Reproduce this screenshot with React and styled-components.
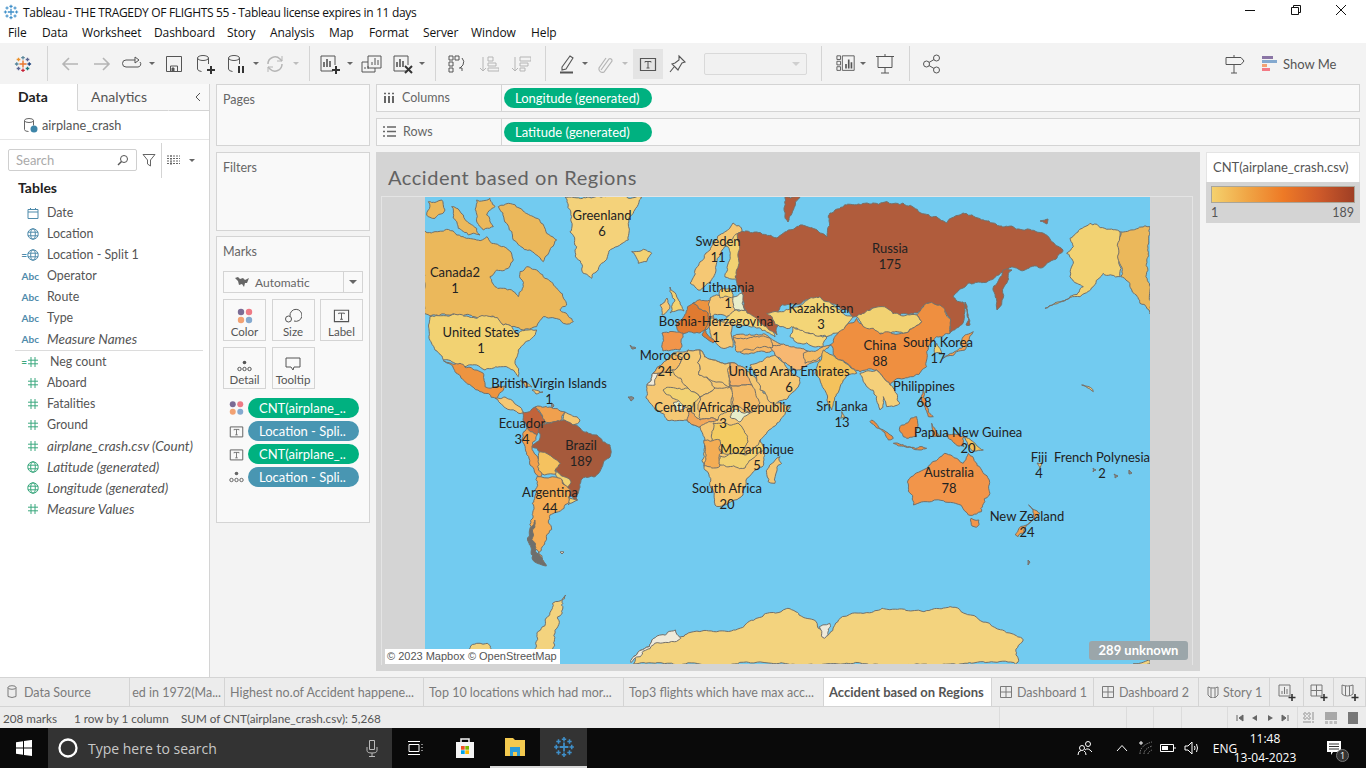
import React from 'react';
import styled, { createGlobalStyle } from 'styled-components';

const GlobalStyle = createGlobalStyle`
  html, body { margin: 0; padding: 0; background: #f3f3f3; overflow: hidden; }
  * { box-sizing: border-box; }
  body { font-family: Lato, "Open Sans", sans-serif; }
`;

const Page = styled.div`
  width: 1366px;
  height: 768px;
  display: flex;
  flex-direction: column;
  overflow: hidden;
  color: #555;
`;

const TitleBar = styled.div`
  height: 24px;
  background: #fff;
  display: flex;
  align-items: center;
  padding-left: 3px;
  color: #111;
  font: 12px "Open Sans", sans-serif;
  letter-spacing: -0.32px;
  > svg { margin-right: 4px; }
`;
const WindowButtons = styled.div`
  margin-left: auto;
  display: flex;
  width: 122px;
  justify-content: space-between;
  padding: 0 19px 4px 0;
  align-items: center;
`;
const MenuBar = styled.div`
  height: 19px;
  background: #fff;
  display: flex;
  color: #111;
  font: 12px "Open Sans", sans-serif;
  letter-spacing: -0.1px;
  padding-bottom: 2px;
  align-items: center;
`;
const MenuItem = styled.span`
  width: ${p => p.$w}px;
  flex: none;
`;

const Toolbar = styled.div`
  height: 41px;
  background: #f3f3f3;
  display: flex;
  align-items: center;
  padding-left: 8px;
`;
const Tool = styled.div`
  width: ${p => p.$w}px;
  height: 30px;
  flex: none;
  margin-left: ${p => p.$ml || 0}px;
  display: flex;
  align-items: center;
  justify-content: center;
  color: ${p => (p.$off ? '#b5b5b5' : '#555')};
  background: ${p => (p.$on ? '#e4e4e4' : 'transparent')};
`;
const Caret = styled.i`
  width: ${p => p.$w}px;
  flex: none;
  display: flex;
  justify-content: center;
  &::after {
    content: '';
    border: 3px solid transparent;
    border-top: 3px solid ${p => (p.$off ? '#bdbdbd' : '#666')};
    border-bottom: 0;
  }
`;
const Sep = styled.div`
  width: ${p => p.$w}px;
  height: 35px;
  flex: none;
  display: flex;
  justify-content: center;
  &::after { content: ''; width: 1px; background: #d4d4d4; }
`;
const DisabledSelect = styled.div`
  width: 103px;
  height: 22px;
  margin-left: 13px;
  flex: none;
  border: 1px solid #d9d9d9;
  border-radius: 2px;
  background: #f1f1f1;
  display: flex;
  align-items: center;
  justify-content: flex-end;
  padding-right: 6px;
  &::after {
    content: '';
    border: 4px solid transparent;
    border-top: 4px solid #cfcfcf;
    border-bottom: 0;
  }
`;
const ShowMe = styled.div`
  width: 117px;
  flex: none;
  padding-left: 13px;
  display: flex;
  align-items: center;
  gap: 6px;
  font-size: 13px;
  color: #555;
`;
const Spacer = styled.div`flex: 1;`;

const Main = styled.div`
  height: 593px;
  display: flex;
  background: #f3f3f3;
`;
const DataPane = styled.aside`
  width: 210px;
  flex: none;
  background: #fff;
  border-right: 1px solid #d4d4d4;
  display: flex;
  flex-direction: column;
`;
const PaneTabs = styled.div`
  height: 27px;
  display: flex;
  background: #f9f9f9;
`;
const PaneTab = styled.div`
  width: ${p => p.$w}px;
  padding-left: ${p => p.$pad}px;
  background: ${p => (p.$on ? '#fff' : '#f9f9f9')};
  border-right: 1px solid ${p => (p.$on ? '#d4d4d4' : 'transparent')};
  border-bottom: 1px solid ${p => (p.$on ? 'transparent' : '#d4d4d4')};
  font-size: 14px;
  font-weight: ${p => (p.$on ? 700 : 400)};
  color: ${p => (p.$on ? '#222' : '#555')};
  line-height: 26px;
`;
const Collapse = styled.div`
  flex: 1;
  border-bottom: 1px solid #d4d4d4;
  display: flex;
  align-items: center;
  justify-content: flex-end;
  padding-right: 6px;
`;
const SourceRow = styled.div`
  height: 29px;
  display: flex;
  align-items: center;
  gap: 3px;
  padding-left: 23px;
  border-bottom: 1px solid #e6e6e6;
  font-size: 12.7px;
  color: #555;
`;
const SearchRow = styled.div`
  height: 31px;
  padding: 9px 0 0 8px;
  display: flex;
  align-items: center;
  color: #666;
`;
const SearchBox = styled.div`
  width: 129px;
  height: 22px;
  flex: none;
  border: 1px solid #cfcfcf;
  border-radius: 2px;
  padding: 0 7px;
  display: flex;
  align-items: center;
  justify-content: space-between;
  color: #aaa;
  font-size: 13px;
`;
const IconSlot = styled.span`
  width: ${p => p.$w}px;
  flex: none;
  display: flex;
  justify-content: center;
`;
const TablesHead = styled.div`
  padding: 8px 0 0 18px;
  height: 31px;
  font-size: 14px;
  font-weight: 700;
  color: #222;
`;
const FieldRow = styled.div`
  height: 21px;
  display: flex;
  align-items: center;
  color: #555;
  font-size: ${p => (p.$i ? 13.5 : 12.4)}px;
  font-style: ${p => (p.$i ? 'italic' : 'normal')};
  white-space: nowrap;
`;
const FieldIcon = styled.span`
  width: 47px;
  padding-right: 8px;
  flex: none;
  display: flex;
  justify-content: flex-end;
  align-items: center;
  font-style: normal;
  font-size: 10px;
  font-weight: 700;
  color: ${p => p.$c};
`;
const FieldIndent = styled.span`padding-left: ${p => p.$x || 0}px;`;
const FieldRule = styled.div`
  height: 1px;
  background: #dcdcdc;
  margin: 0.5px 6px 0.5px 15px;
`;

const SideCol = styled.div`
  width: 154px;
  margin-left: 6px;
  flex: none;
  display: flex;
  flex-direction: column;
`;
const Card = styled.section`
  height: ${p => p.$h}px;
  margin-bottom: ${p => p.$mb}px;
  background: #f9f9f9;
  border: 1px solid #d4d4d4;
  padding: 7px 6px;
  font-size: 12.5px;
  color: #666;
  flex: none;
`;
const MarkType = styled.div`
  height: 22px;
  margin-top: 12px;
  width: 140px;
  border: 1px solid #d4d4d4;
  background: #f9f9f9;
  display: flex;
  align-items: center;
  font-size: 12px;
  padding-left: 11px;
  gap: 6px;
`;
const MarkArrow = styled.span`
  margin-left: auto;
  width: 19px;
  height: 100%;
  border-left: 1px solid #d4d4d4;
  display: flex;
  align-items: center;
  justify-content: center;
  &::after {
    content: '';
    border: 4px solid transparent;
    border-top: 4px solid #666;
    border-bottom: 0;
  }
`;
const MarkGrid = styled.div`
  display: grid;
  grid-template-columns: 43px 43px 43px;
  grid-auto-rows: 42px;
  column-gap: 5.5px;
  row-gap: 6px;
  margin-top: 6px;
`;
const MarkBtn = styled.div`
  border: 1px solid #d4d4d4;
  display: flex;
  flex-direction: column;
  align-items: center;
  justify-content: flex-end;
  gap: 1px;
  font-size: 11.5px;
  color: #555;
  padding-bottom: 2px;
`;
const PillList = styled.div`
  margin-top: 9px;
  display: flex;
  flex-direction: column;
  gap: 3px;
`;
const PillRow = styled.div`
  display: flex;
  align-items: center;
  height: 20px;
  padding-left: 6px;
  gap: 4px;
`;
const Pill = styled.div`
  height: 20px;
  width: ${p => p.$w}px;
  flex: none;
  border-radius: 10px;
  background: ${p => p.$c};
  color: #fff;
  font-size: 13px;
  line-height: 20px;
  padding-left: 11px;
  white-space: nowrap;
  overflow: hidden;
`;

const Work = styled.div`
  width: 984px;
  margin-left: 6px;
  flex: none;
  display: flex;
  flex-direction: column;
`;
const Shelf = styled.div`
  height: 28px;
  margin-bottom: 6px;
  background: #f9f9f9;
  border: 1px solid #d4d4d4;
  display: flex;
  align-items: center;
  flex: none;
`;
const ShelfName = styled.div`
  width: 125px;
  height: 100%;
  flex: none;
  border-right: 1px solid #d4d4d4;
  margin-right: 2px;
  display: flex;
  align-items: center;
  gap: 7px;
  padding-left: 6px;
  padding-bottom: 1px;
  font-size: 12.5px;
  color: #666;
`;
const ViewRow = styled.div`
  display: flex;
  gap: 6px;
  flex: 1;
`;
const Canvas = styled.div`
  width: 824px;
  height: 519px;
  background: #d4d4d4;
  padding: 0 7px 0 5px;
  flex: none;
`;
const SheetTitle = styled.div`
  height: 44px;
  padding: 13px 0 0 7px;
  font-size: 20px;
  line-height: 25px;
  color: #626262;
  letter-spacing: 0.55px;
`;
const MapFrame = styled.div`
  position: relative;
  height: 469px;
  border: 1px solid #e4e4e4;
  border-bottom-width: 0;
  display: flex;
  justify-content: center;
  svg { display: block; }
`;
const Attribution = styled.div`
  position: absolute;
  left: 3px;
  bottom: 1px;
  width: 175px;
  height: 15px;
  background: #fff;
  color: #555;
  font: 11px/15px "Liberation Sans", sans-serif;
  padding-left: 2px;
  white-space: nowrap;
`;
const Unknown = styled.div`
  position: absolute;
  right: 4px;
  bottom: 5px;
  width: 99px;
  height: 19px;
  background: #9ba6aa;
  border-radius: 3px;
  color: #fff;
  font-size: 13px;
  font-weight: 700;
  line-height: 19px;
  text-align: center;
`;
const Legend = styled.div`
  width: 154px;
  height: 71px;
  background: #d4d4d4;
  flex: none;
`;
const LegendHead = styled.div`
  height: 30px;
  background: #fff;
  border: 1px solid #e4e4e4;
  border-bottom: 0;
  padding-left: 6px;
  font-size: 13px;
  line-height: 29px;
  color: #555;
  white-space: nowrap;
`;
const Ramp = styled.div`
  height: 17px;
  margin: 4px 5px 0;
  border: 1px solid #a9a598;
  background: linear-gradient(90deg, #f5d16d 0%, #f0a545 25%, #ee7a26 50%, #cf5a2a 75%, #9f3f25 100%);
`;
const RampLabels = styled.div`
  display: flex;
  justify-content: space-between;
  padding: 2px 6px 0 5px;
  font-size: 12.5px;
  color: #555;
`;

const TabStrip = styled.div`
  height: 30px;
  display: flex;
  background: #ececec;
  border-top: 1px solid #d4d4d4;
  border-bottom: 1px solid #d4d4d4;
  flex: none;
`;
const Tab = styled.div`
  width: ${p => p.$w}px;
  flex: none;
  display: flex;
  align-items: center;
  justify-content: ${p => (p.$end ? 'flex-end' : p.$center ? 'center' : 'flex-start')};
  padding-left: ${p => (p.$center || p.$end ? 0 : p.$pad || 5)}px;
  padding-right: ${p => (p.$end ? 3 : 0)}px;
  gap: ${p => p.$gap || 5}px;
  overflow: hidden;
  white-space: nowrap;
  border-right: 1px solid #d4d4d4;
  background: ${p => (p.$on ? '#fff' : '#ececec')};
  color: ${p => (p.$on ? '#555' : '#7b7b7b')};
  font-size: ${p => (p.$on ? 13 : 12.5)}px;
  font-weight: ${p => (p.$on ? 700 : 400)};
`;
const StatusBar = styled.div`
  height: 21px;
  display: flex;
  background: #ececec;
  align-items: center;
  font-size: 11.7px;
  color: #555;
  flex: none;
`;
const StatusText = styled.span`
  width: ${p => p.$w}px;
  padding-left: ${p => p.$pad}px;
  flex: none;
  white-space: nowrap;
`;
const StatusCell = styled.span`
  width: ${p => p.$w}px;
  height: 100%;
  flex: none;
  display: flex;
  align-items: center;
  justify-content: center;
  gap: ${p => p.$gap || 0}px;
  border-left: 1px solid #dcdcdc;
`;

const Taskbar = styled.div`
  height: 40px;
  background: #0a0a0a;
  display: flex;
  align-items: center;
  flex: none;
  color: #fff;
  font-family: "Open Sans", sans-serif;
`;
const TaskSlot = styled.div`
  width: ${p => p.$w}px;
  height: 100%;
  flex: none;
  display: flex;
  align-items: center;
  justify-content: center;
  background: ${p => (p.$on ? '#333' : 'transparent')};
  border-bottom: ${p => (p.$mark ? '2px solid #d8d8d8' : '0')};
`;
const TaskSearch = styled.div`
  width: 344px;
  height: 100%;
  flex: none;
  background: #333;
  display: flex;
  align-items: center;
  padding: 0 14px 0 10px;
  gap: 10px;
  color: #c8c8c8;
  font-size: 14px;
`;
const MicSlot = styled.span`margin-left: auto; display: flex;`;
const TrayText = styled.span`
  width: ${p => p.$w}px;
  flex: none;
  display: flex;
  flex-direction: column;
  align-items: center;
  white-space: nowrap;
  font-size: 12px;
  line-height: 19px;
`;
const NotifyWrap = styled.div`
  position: relative;
  width: 32px;
  margin: 0 16px 0 31px;
  flex: none;
  display: flex;
  justify-content: center;
`;
const NotifyBadge = styled.span`
  position: absolute;
  left: 18px;
  top: 9px;
  width: 13px;
  height: 13px;
  border-radius: 50%;
  background: #333;
  border: 1px solid #777;
  font-size: 9px;
  line-height: 11px;
  text-align: center;
`;

/* icons */
const Svg = ({ s = 20, h, children, ...rest }) => (
  <svg width={s} height={h || s} viewBox={`0 0 ${s} ${h || s}`} fill="none" stroke="currentColor" {...rest}>
    {children}
  </svg>
);
const Cross = ({ x, y, r, c, w = 1.4 }) => (
  <path d={`M${x - r} ${y}H${x + r}M${x} ${y - r}V${y + r}`} stroke={c} strokeWidth={w} />
);
const Logo = ({ mono, s = 20 }) => {
  const c = k => mono || k;
  return (
    <Svg s={20} width={s} height={s}>
      <Cross x={10} y={10} r={4} c={c('#e8762d')} w={1.6} />
      <Cross x={10} y={3} r={2} c={c('#5b879b')} />
      <Cross x={10} y={17} r={2} c={c('#c72035')} />
      <Cross x={3} y={10} r={2} c={c('#59879b')} />
      <Cross x={17} y={10} r={2} c={c('#1f447e')} />
      <Cross x={5} y={5} r={2} c={c('#eb912b')} />
      <Cross x={15} y={5} r={2} c={c('#5c6692')} />
      <Cross x={5} y={15} r={2} c={c('#5c6692')} />
      <Cross x={15} y={15} r={2} c={c('#1f7a7a')} />
    </Svg>
  );
};
const Back = () => <Svg><path d="M18 10H3M9 4l-6 6 6 6" strokeWidth="1.6" /></Svg>;
const Fwd = () => <Svg><path d="M2 10h15M11 4l6 6-6 6" strokeWidth="1.6" /></Svg>;
const Loop = () => <Svg><path d="M13 6H4a3 3 0 0 0 0 7h12a3 3 0 0 0 2-5M13 3v6l4-3z" strokeWidth="1" /></Svg>;
const Save = () => <Svg><path d="M2.500 2.500h15v15h-15zM6.500 17v-5h7v5" /><path d="M8 14h2v3H8z" fill="currentColor" /></Svg>;
const Can = ({ children }) => (
  <Svg s={22}>
    <ellipse cx="9" cy="5" rx="5.500" ry="2.500" />
    <path d="M3.500 5v11q0 2 4 2.500M14.500 5v6" />
    {children}
  </Svg>
);
const Plus = ({ x, y, c = '#333' }) => <path d={`M${x - 4} ${y}h8M${x} ${y - 4}v8`} stroke={c} strokeWidth="2" />;
const Refresh = () => <Svg><path d="M3 10a7 7 0 0 1 12-5l2 2M17 10a7 7 0 0 1-12 5l-2-2" strokeWidth="1.5" /><path d="M17 2v5h-5M3 18v-5h5" strokeWidth="1" /></Svg>;
const Sheet = ({ children }) => (
  <Svg s={22}>
    <path d="M14 18H2V3h14v9" />
    <path d="M5 14V9M8 14V6M11 14V8" strokeWidth="1.6" />
    {children}
  </Svg>
);
const Dup = () => <Svg s={22}><path d="M8 3h13v12H8zM8 9H2v10h13v-4" /><path d="M12 12V9M15 12V5M18 12V7M5 16v-2M8 16v-3" /></Svg>;
const Grp = () => <Svg><path d="M2 2h4v4H2zM8 2h4v4H8zM2 8h4v4H2zM2 14h4v4H2z" /><path d="M15 4q3 3 1 7l-3 3M12 14h3v3" /></Svg>;
const SortUp = () => <Svg s={20}><path d="M4 3v14M1 14l3 3 3-3" /><path d="M9 3h5v4H9zM9 9h8v3H9zM9 14h11v3H9z" /></Svg>;
const SortDown = () => <Svg s={20}><path d="M4 3v14M1 14l3 3 3-3" /><path d="M9 3h11v4H9zM9 9h8v3H9zM9 14h5v3H9z" /></Svg>;
const Pen = () => <Svg><path d="M4 13L12 2l3 2-7 11-4 1z" strokeWidth="1.1" /><path d="M2 18.500h13" strokeWidth="2" /></Svg>;
const Clip = () => <Svg><path d="M6 16L14 5a2 2 0 0 1 3 2L9 18a3.500 3.500 0 0 1-5-4l7-10" strokeWidth="1.2" /></Svg>;
const TBox = ({ s = 18 }) => (
  <Svg s={18} width={s} height={s} viewBox="0 0 18 18">
    <path d="M1.500 3.500h15v12h-15z" strokeWidth="1.2" />
    <path d="M6 6.500h6M9 6.500v6.500M7.500 13h3M6 6.500v1M12 6.500v1" strokeWidth="1" />
  </Svg>
);
const PinIcon = () => <Svg><path d="M12 2l6 6-3 1-3 5-1 2-6-6 3-1 4-3zM7 13l-4 5" strokeWidth="1.1" /></Svg>;
const ChartIcon = () => <Svg s={22}><path d="M1 2h4v4H1zM1 8h4v4H1zM1 14h4v4H1zM7 2h13v16H7z" /><path d="M11 16v-5M14 16V6M17 16v-7" strokeWidth="1.8" /></Svg>;
const Present = () => <Svg s={22}><path d="M2 3.500h18M4 3.500v11h14v-11M11 14.500V20M7 20h8M11 1v2" /></Svg>;
const Share = () => <Svg><circle cx="4.500" cy="10" r="3" /><circle cx="14.500" cy="4" r="3" /><circle cx="14.500" cy="16" r="3" /><path d="M7 8.500l5-3M7 11.500l5 3" /></Svg>;
const Sign = () => <Svg><path d="M1 3.500h15l3 3.500-3 3.500H1zM9 1v2.500M9 10.500V19M6 19h6" /></Svg>;
const ShowMeBars = () => (
  <Svg s={15} h={16} stroke="none">
    <path d="M0 0h11v3H0z" fill="#8a75a5" />
    <path d="M0 4h15v3H0z" fill="#84a9cf" />
    <path d="M0 8h5v3H0z" fill="#f2a273" />
    <path d="M0 12h8v3H0z" fill="#f37a85" />
  </Svg>
);
const Globe = ({ c }) => (
  <Svg s={12} stroke={c}>
    <circle cx="6" cy="6" r="5.200" />
    <ellipse cx="6" cy="6" rx="2.300" ry="5.200" />
    <path d="M.8 4.200h10.400M.8 7.800h10.400" />
  </Svg>
);
const Hash = ({ c }) => <Svg s={12} stroke={c}><path d="M4 1v10M8 1v10M1 4.200h10M1 7.800h10" /></Svg>;
const Cal = ({ c }) => <Svg s={12} stroke={c}><path d="M1 2.500h10v9H1zM1 5h10M3.500 1v2M8.500 1v2" /></Svg>;
const Dots = () => (
  <Svg s={16} stroke="none">
    <circle cx="4" cy="4" r="3.200" fill="#7b6b94" />
    <circle cx="12" cy="4" r="3.200" fill="#ee7a85" />
    <circle cx="4" cy="12" r="3.200" fill="#f2a273" />
    <circle cx="12" cy="12" r="3.200" fill="#84a9cf" />
  </Svg>
);
const DetailDots = () => (
  <Svg s={15} h={12}>
    <circle cx="7.500" cy="2.500" r="1.800" fill="currentColor" stroke="none" />
    <circle cx="2.500" cy="9" r="1.700" />
    <circle cx="7.500" cy="9" r="1.700" />
    <circle cx="12.500" cy="9" r="1.700" />
  </Svg>
);
const SizeIcon = () => <Svg s={18}><path d="M6 10a6 6 0 1 1 4 5" /><circle cx="4.500" cy="13" r="3" /></Svg>;
const Bubble = () => <Svg s={16}><path d="M1 2h14v9H9l-1 3-2-3H1z" /></Svg>;
const Bars3 = () => <Svg s={12}><path d="M2 4v7M6 4v7M10 4v7" strokeWidth="2" /><path d="M1 1.500h2M5 1.500h2M9 1.500h2" strokeWidth="1.500" /></Svg>;
const RowsIcon = () => <Svg s={13}><path d="M0 2h2M4 2h9M0 6.500h2M4 6.500h9M0 11h2M4 11h9" strokeWidth="1.500" /></Svg>;
const Lens = () => <Svg s={12} stroke="#555"><circle cx="7" cy="5" r="3.500" /><path d="M4.500 7.500L1 11" strokeWidth="1.400" /></Svg>;
const Funnel = () => <Svg s={14}><path d="M1 1.500h12L8.500 7v6l-3-2V7z" /></Svg>;
const GridList = () => <Svg s={13} h={10}><path d="M0 1h13M0 3.500h13M0 6h13M0 8.500h13M4 0v10" strokeWidth="1" strokeDasharray="2 1" /></Svg>;
const SourceIcon = () => (
  <Svg s={16}>
    <ellipse cx="6" cy="3.500" rx="4.500" ry="2" stroke="#666" />
    <path d="M1.500 3.500v9q0 2 4 2M10.500 3.500v5" stroke="#666" />
    <circle cx="11" cy="12" r="3.500" fill="#3d85a8" stroke="none" />
  </Svg>
);
const MiniMap = () => <Svg s={14} h={10} stroke="none"><path d="M0 1l3-1 2 2 3-1 2 2 4-2-2 5-2 0-1 4-2-3-3 1-1-4z" fill="#666" /></Svg>;
const Cylinder = () => <Svg s={10} h={14}><ellipse cx="5" cy="2.500" rx="4" ry="1.800" /><path d="M1 2.500v9q4 2 8 0v-9" /></Svg>;
const DashIcon = () => <Svg s={12}><path d="M.5.500h11v11H.5zM6 .5v11M.5 6h11" /></Svg>;
const StoryIcon = () => <Svg s={12}><path d="M1 1q2.500 1 5 1t5-1v8q-2 3-5 3t-5-3zM4 2v10M8 2v10" /></Svg>;
const TabNew = ({ k }) => (
  <Svg s={18} stroke="#777">
    {k === 'sheet' && <path d="M1 2h11v11H1zM4 11V8M6.500 11V4M9 11V6" />}
    {k === 'dash' && <path d="M1 2h11v11H1zM6.500 2v11M1 7.500h11" />}
    {k === 'story' && <path d="M1 2q3 1 5.500 1T12 2v9q-2 2-5.500 2T1 11zM4.500 3v10M8.500 3v10" />}
    <path d="M14 11v7M10.500 14.500h7" stroke="#333" strokeWidth="1.600" />
  </Svg>
);

/* map: polygons traced per region, each group has its own scale. Edges get jagged
   with a noise keyed on the edge midpoint, so shared borders stay shared. */
const coast = '#73706a';
const noise = (x, y, k) => {
  const v = Math.sin(x * 12.9898 + y * 78.233 + k * 37.719) * 43758.5453;
  return (v - Math.floor(v)) * 2 - 1;
};
const jag = (a, b, min, out) => {
  const len = Math.hypot(b[0] - a[0], b[1] - a[1]);
  if (len < min) { out.push(b); return; }
  const mx = (a[0] + b[0]) / 2;
  const my = (a[1] + b[1]) / 2;
  const amp = Math.min(len * 0.16, min * 0.7);
  const mid = [mx + noise(mx, my, 1) * amp, my + noise(mx, my, 2) * amp];
  jag(a, mid, min, out);
  jag(mid, b, min, out);
};
const rough = (pts, min) => {
  const p = pts.trim().split(/\s+/).map(s => s.split(',').map(Number));
  const out = [];
  p.forEach((a, i) => jag(a, p[(i + 1) % p.length], min, out));
  return out.map(q => `${q[0].toFixed(1)},${q[1].toFixed(1)}`).join(' ');
};
const Z = ({ t, items, min }) => (
  <g transform={t}>
    {items.map(([pts, fill], i) => (
      <polygon key={i} points={rough(pts, min)} fill={fill} stroke={coast} strokeWidth="1" vectorEffect="non-scaling-stroke" strokeLinejoin="round" />
    ))}
  </g>
);

const Y1 = '#f2d272';
const Y2 = '#f5c874';
const Y3 = '#f5bb65';
const OR = '#ef8f40';
const PALE = '#e8eecb';
const RU = '#b05c3c';

const screenPolys = [
  // africa base and countries, screen pixels
  ['647,385 653,373 663,363 673,353 688,350 700,350 713,360 730,363 743,367 755,377 763,393 777,403 790,407 788,410 777,423 760,440 764,450 762,467 746,480 743,495 725,505 715,505 704,467 704,450 705,440 700,427 687,420 667,420 650,403 646,398', Y2],
  ['647,385 653,373 660,373 655,385', '#f0ead8'],
  ['653,373 663,363 673,353 682,358 672,370 660,373', Y3],
  ['682,358 688,350 700,350 699,375 715,388 700,397 688,388 672,370', '#f5cb75'],
  ['700,350 713,360 730,363 730,387 699,375', '#f5cb75'],
  ['730,363 743,367 752,385 730,385', '#f4b268'],
  ['730,385 752,385 760,403 750,413 733,407', '#f4bc6a'],
  ['733,410 750,413 740,422 730,417', PALE],
  ['673,403 680,400 685,408 675,410', PALE],
  ['663,390 688,388 700,397 690,410 672,398', Y1],
  ['700,397 715,388 730,387 733,407 718,420 700,420', Y2],
  ['690,410 700,420 718,420 700,427 687,420', '#f2a75a'],
  ['713,423 738,423 748,442 745,455 723,453 713,443', '#f4cc62'],
  ['704,440 720,440 720,466 704,466', '#f4ad55'],
  ['720,456 745,455 760,440 764,450 745,468 720,465', Y1],
  // arabia, middle east
  ['750,365 775,355 790,370 800,378 800,383 788,398 775,405 760,390', Y2],
  ['733,336 770,338 785,345 770,352 740,352', '#f5b868'],
  ['770,345 805,350 820,360 800,370 790,366 775,355', '#f7b872'],
  // central america, caribbean
  ['495,398 505,397 520,407 525,414 518,413 500,403', Y2],
  ['520,380 532,387 525,387', Y2],
  ['532,390 543,392 536,394', Y2],
  // south america, upper part
  ['523,412 535,407 545,423 537,435 527,428 523,420', '#c2633a'],
  ['535,407 550,407 565,412 560,422 545,422', '#f0a04e'],
  ['565,412 580,420 573,425 563,420', Y2],
  ['527,428 537,435 532,447 545,468 540,478 530,465 522,440', '#f2a04e'],
  ['532,447 540,438 538,425 553,422 565,420 580,428 597,435 610,445 610,457 602,467 594,477 581,480 577,500 570,495 558,478 553,460 540,452', '#a65a3c'],
  // europe
  ['690,283 695,270 713,243 733,223 742,230 735,240 722,250 716,270 710,282 698,290', Y2],
  ['725,277 730,255 725,245 740,232 752,238 752,270 738,278', Y1],
  ['670,287 680,302 684,311 670,313 675,300', Y1],
  ['660,305 667,298 670,306 662,315', Y2],
  ['677,323 693,303 708,313 705,330 700,333 682,335', '#e07a30'],
  ['693,303 710,300 712,325 705,330 708,313', '#ee9440'],
  ['662,333 683,333 680,350 663,351', '#f2954a'],
  ['705,330 715,340 713,343 702,335', '#e07a30'],
  ['710,298 733,297 735,315 710,317', Y2],
  ['733,297 743,293 745,310 735,310', PALE],
  ['735,310 773,312 775,337 747,325 720,323', '#f5d67a'],
  ['710,318 733,322 733,347 720,347 710,333', Y2],
  ['733,338 770,338 772,348 737,352', '#f5b868'],
  ['720,290 730,288 733,297 720,298', Y1],
  // russia
  ['738,233 757,232 777,238 800,225 817,230 827,237 830,213 835,210 843,207 867,203 903,203 913,207 947,223 963,213 993,223 1023,230 1043,233 1063,250 1057,258 1040,268 1013,267 1007,270 987,282 970,283 953,297 963,302 963,323 950,333 950,318 940,305 927,303 917,313 900,315 880,307 853,317 820,297 780,307 777,335 747,313 743,300 735,277', RU],
  ['1003,270 1012,270 1002,300 997,310 993,290', RU],
  ['785,197 800,197 788,222 785,215', RU],
  ['965,302 970,325 966,325', RU],
  ['1040,221 1048,219 1047,224', RU],
  // specks
  ['1037,463 1042,463 1040,468', Y2],
  ['1093,468 1096,470 1093,472', '#888'],
  ['1114,474 1118,476 1115,478', '#888'],
  ['1129,470 1132,473 1129,474', '#888'],
  ['1028,560 1030,562 1028,565', '#888'],
  ['560,552 564,552 562,554', '#f0ead8'],
  ['630,345 636,348 632,349', '#888'],
  ['628,397 634,398 631,401', '#888'],
  ['551,403 554,406 552,408', '#888'],
];

const zoom6Polys = [
  ['-40,370 0,365 120,320 220,380 190,420 140,440 80,430 35,410 0,410', '#f3d577'],
  ['230,380 300,350 360,375 410,375 425,395 370,430 300,430 250,410', Y1],
  ['150,465 185,420 230,385 250,410 300,432 370,430 425,395 410,375 440,340 480,345 510,385 510,430 470,440 445,470 440,530 400,560 330,585 290,540 240,545 180,510', OR],
  ['40,410 140,440 130,470 60,460 30,440', '#f5d67a'],
  ['70,490 130,470 150,465 130,490 110,510 75,520', Y3],
  ['130,480 180,510 230,550 190,570 160,640 155,660 120,570 105,550', '#f4c25c'],
  ['185,665 195,680 182,685', Y2],
  ['240,550 290,540 330,585 360,640 320,650 310,620 300,660 290,620 260,590', '#f5d07a'],
  ['470,460 485,490 465,490', Y1],
  ['490,505 550,470 550,440 580,425 555,480', '#f2a04e'],
  ['430,600 440,650 460,680 445,680 425,630', OR],
  ['275,690 340,745 325,750 270,695', OR],
  ['340,760 440,775 420,780', OR],
  ['360,710 410,680 410,740 370,740', OR],
  ['455,700 480,740 460,740', OR],
  ['500,730 552,740 552,770 505,745', OR],
  ['553,740 610,780 570,775', '#f4c25c'],
  ['870,145 930,100 1020,125 1020,260 970,250 940,290 900,320 795,355 880,315 910,290 870,260 880,220 860,190 880,170', Y1],
  ['1022,125 1110,110 1110,372 1080,340 1050,280 1022,260', '#ebb85b'],
  ['905,585 935,595 940,605 925,595', Y2],
];

const zoom5Polys = [
  ['132,120 165,125 200,118 230,135 260,145 290,150 320,140 335,160 365,170 385,180 400,210 385,235 350,240 330,260 345,290 395,300 415,320 430,290 420,245 440,230 470,240 495,265 525,290 560,345 540,360 580,395 550,400 525,385 490,380 470,410 430,420 395,410 370,405 340,378 150,378 132,370', '#ebb85b'],
  ['145,35 185,30 195,60 165,85 140,75', '#ebb85b'],
  ['215,50 250,75 290,115 300,135 265,135 235,115', '#ebb85b'],
  ['290,30 330,25 345,50 320,75 340,110 310,120 290,85', '#ebb85b'],
  ['355,50 385,40 420,55 460,80 500,130 530,150 490,215 450,180 400,150 380,100', '#ebb85b'],
  ['150,380 340,380 370,405 395,410 415,430 470,420 455,445 415,480 405,520 415,560 400,540 370,530 315,540 290,525 255,530 225,520 190,510 165,480 148,430', Y1],
  ['190,512 240,520 310,550 315,590 345,590 375,588 350,625 300,605 260,580 225,545', '#ee9440'],
  ['555,22 785,22 760,70 745,100 745,150 700,175 665,220 635,265 610,250 590,205 590,170 570,125 575,80', '#f4d27a'],
  ['755,185 790,178 815,190 800,215 775,220', Y1],
];

const zoom7Polys = [
  ['305,35 345,70 335,95 345,105 315,105 303,90', '#f5c25f'],
  ['335,90 365,125 358,145 340,115', Y1],
  ['300,110 345,115 362,170 352,205 325,225 318,290 300,345 312,375 290,320 292,220', '#f5ad55'],
  ['296,240 282,300 295,365 318,378 300,340 290,300', '#6f6f6c'],
  ['360,170 378,180 360,195', Y1],
  ['765,50 768,70 755,130 742,125 742,85', Y2],
  ['1080,40 1115,70 1125,40 1165,120 1165,165 1150,215 1125,225 1100,190 1060,180 1020,195 1010,120 1045,85', '#f2954a'],
  ['1130,235 1145,240 1140,262 1132,258', '#f2954a'],
  ['1240,195 1262,220 1245,245 1250,220', '#f2a04e'],
  ['1245,245 1235,260 1220,290 1215,285', '#f2a04e'],
  ['485,672 485,650 520,600 600,575 680,570 780,505 830,540 850,590 880,535 960,505 1040,515 1090,500 1190,570 1230,600 1215,672', '#f3d37e'],
  ['480,668 485,650 520,600 565,570 575,595 525,610 498,650', '#efeadb'],
  ['840,560 860,550 850,595', '#efeadb'],
  ['290,672 300,590 330,490 355,465 340,560 335,672', '#f3d37e'],
  ['185,610 205,610 225,672 90,672', '#f3d37e'],
  ['1440,672 1470,660 1472,672', '#f3d37e'],
];

const labels = [
  ['Greenland', 6, 602, 216], ['Sweden', 11, 718, 242], ['Russia', 175, 890, 249], ['Canada2', 1, 455, 273],
  ['Lithuania', 1, 728, 288], ['Kazakhstan', 3, 821, 309], ['Bosnia-Herzegovina', 1, 716, 322], ['United States', 1, 481, 333],
  ['China', 88, 880, 346], ['South Korea', 17, 938, 343], ['Morocco', 24, 665, 356], ['United Arab Emirates', 6, 789, 372],
  ['Philippines', 68, 924, 387], ['British Virgin Islands', 1, 549, 384], ['Central African Republic', 3, 723, 408],
  ['Sri Lanka', 13, 842, 407], ['Ecuador', 34, 522, 424], ['Papua New Guinea', 20, 968, 433], ['Brazil', 189, 581, 446],
  ['Mozambique', 5, 757, 450], ['Fiji', 4, 1039, 458], ['French Polynesia', 2, 1102, 458], ['Australia', 78, 949, 473],
  ['South Africa', 20, 727, 489], ['Argentina', 44, 550, 493], ['New Zealand', 24, 1027, 517],
];

const WorldMap = () => (
  <svg width="725" height="467" viewBox="425 197 725 467">
    <rect x="425" y="197" width="725" height="467" fill="#72cbf0" />
    <Z t="" items={screenPolys} min={3} />
    <Z t="translate(780 190) scale(0.3333)" items={zoom6Polys} min={9} />
    <Z t="translate(380 190) scale(0.3333)" items={zoom5Polys} min={9} />
    <Z t="translate(380 440) scale(0.523 0.3333)" items={zoom7Polys} min={8} />
    <g fontFamily="Lato, sans-serif" fontSize="13" fill="#222" textAnchor="middle">
      {labels.map(([name, n, x, y]) => (
        <g key={name}>
          <text x={x} y={y + 4}>{name}</text>
          <text x={x} y={y + 20}>{n}</text>
        </g>
      ))}
    </g>
  </svg>
);

const dims = [
  ['cal', 'Date'], ['globe', 'Location'], ['globe=', 'Location - Split 1'], ['abc', 'Operator'],
  ['abc', 'Route'], ['abc', 'Type'], ['abc', 'Measure Names', true],
];
const measures = [
  ['hash=', 'Neg count'], ['hash', 'Aboard'], ['hash', 'Fatalities'], ['hash', 'Ground'],
  ['hash', 'airplane_crash.csv (Count)', true], ['globeG', 'Latitude (generated)', true],
  ['globeG', 'Longitude (generated)', true], ['hash', 'Measure Values', true],
];
const BLUE = '#4f8bab';
const GREEN = '#3ba87e';
const Field = ({ kind, name, i }) => {
  const c = kind === 'abc' || kind === 'cal' || kind === 'globe' || kind === 'globe=' ? BLUE : GREEN;
  return (
    <FieldRow $i={i}>
      <FieldIcon $c={c}>
        {kind.endsWith('=') && '='}
        {kind === 'abc' && 'Abc'}
        {kind === 'cal' && <Cal c={c} />}
        {kind.startsWith('globe') && <Globe c={c} />}
        {kind.startsWith('hash') && <Hash c={c} />}
      </FieldIcon>
      <FieldIndent $x={kind === 'hash=' ? 3 : 0}>{name}</FieldIndent>
    </FieldRow>
  );
};

const menu = [['File', 34], ['Data', 40], ['Worksheet', 72], ['Dashboard', 73], ['Story', 43], ['Analysis', 59], ['Map', 40], ['Format', 54], ['Server', 48], ['Window', 60], ['Help', 40]];

const MarkPill = ({ icon, c, text }) => (
  <PillRow>
    <IconSlot $w={15}>{icon}</IconSlot>
    <Pill $w={111} $c={c}>{text}</Pill>
  </PillRow>
);

export default function App() {
  return (
    <Page>
      <GlobalStyle />
      <TitleBar>
        <Logo mono="#3f8fc9" s={16} />
        Tableau - THE TRAGEDY OF FLIGHTS 55 - Tableau license expires in 11 days
        <WindowButtons>
          <Svg s={12} stroke="#111"><path d="M1 6.500h10" /></Svg>
          <Svg s={12} stroke="#111"><path d="M1.500 3.500h7v7h-7zM3.500 3.500v-2h7v7h-2" /></Svg>
          <Svg s={12} stroke="#111"><path d="M1 1l10 10M11 1L1 11" /></Svg>
        </WindowButtons>
      </TitleBar>
      <MenuBar>
        <MenuItem $w={8} />
        {menu.map(([m, w]) => <MenuItem key={m} $w={w}>{m}</MenuItem>)}
      </MenuBar>
      <Toolbar>
        <Tool $w={30}><Logo s={18} /></Tool>
        <Sep $w={18} />
        <Tool $w={28} $off><Back /></Tool>
        <Tool $w={36} $off><Fwd /></Tool>
        <Tool $w={24}><Loop /></Tool>
        <Caret $w={16} />
        <Tool $w={28}><Save /></Tool>
        <Tool $w={34}><Can><Plus x={17} y={17} /></Can></Tool>
        <Tool $w={28}><Can><path d="M14 13v7M18 13v7" stroke="#333" strokeWidth="2" /></Can></Tool>
        <Caret $w={12} />
        <Tool $w={26} $off><Refresh /></Tool>
        <Caret $w={16} $off />
        <Sep $w={10} />
        <Tool $w={32}><Sheet><Plus x={17} y={17} /></Sheet></Tool>
        <Caret $w={8} />
        <Tool $w={34}><Dup /></Tool>
        <Tool $w={30}><Sheet><path d="M13 13l7 7M20 13l-7 7" stroke="#333" strokeWidth="2" /></Sheet></Tool>
        <Caret $w={8} />
        <Sep $w={18} />
        <Tool $w={26}><Grp /></Tool>
        <Tool $w={38} $off><SortUp /></Tool>
        <Tool $w={26} $off><SortDown /></Tool>
        <Sep $w={22} />
        <Tool $w={24}><Pen /></Tool>
        <Caret $w={10} />
        <Tool $w={30} $off><Clip /></Tool>
        <Caret $w={10} $off />
        <Tool $w={30} $ml={3} $on><TBox /></Tool>
        <Tool $w={28}><PinIcon /></Tool>
        <DisabledSelect />
        <Sep $w={29} />
        <Tool $w={20}><ChartIcon /></Tool>
        <Caret $w={14} />
        <Tool $w={30}><Present /></Tool>
        <Sep $w={18} />
        <Tool $w={28}><Share /></Tool>
        <Spacer />
        <Tool $w={28}><Sign /></Tool>
        <ShowMe><ShowMeBars />Show Me</ShowMe>
      </Toolbar>
      <Main>
        <DataPane>
          <PaneTabs>
            <PaneTab $w={78} $pad={18} $on>Data</PaneTab>
            <PaneTab $w={91} $pad={13}>Analytics</PaneTab>
            <Collapse>
              <Svg s={10}><path d="M7 1L3 5l4 4" /></Svg>
            </Collapse>
          </PaneTabs>
          <SourceRow><SourceIcon />airplane_crash</SourceRow>
          <SearchRow>
            <SearchBox>Search<Lens /></SearchBox>
            <IconSlot $w={24}><Funnel /></IconSlot>
            <Sep $w={1} />
            <IconSlot $w={22}><GridList /></IconSlot>
            <Caret $w={16} />
          </SearchRow>
          <TablesHead>Tables</TablesHead>
          {dims.map(([k, n, i]) => <Field key={n} kind={k} name={n} i={i} />)}
          <FieldRule />
          {measures.map(([k, n, i]) => <Field key={n} kind={k} name={n} i={i} />)}
        </DataPane>
        <SideCol>
          <Card $h={62} $mb={6}>Pages</Card>
          <Card $h={79} $mb={5}>Filters</Card>
          <Card $h={287} $mb={0}>
            Marks
            <MarkType><MiniMap />Automatic<MarkArrow /></MarkType>
            <MarkGrid>
              <MarkBtn><Dots />Color</MarkBtn>
              <MarkBtn><SizeIcon />Size</MarkBtn>
              <MarkBtn><TBox s={17} />Label</MarkBtn>
              <MarkBtn><DetailDots />Detail</MarkBtn>
              <MarkBtn><Bubble />Tooltip</MarkBtn>
            </MarkGrid>
            <PillList>
              <MarkPill icon={<Dots />} c="#00b180" text="CNT(airplane_.." />
              <MarkPill icon={<TBox s={15} />} c="#4996b2" text="Location - Spli.." />
              <MarkPill icon={<TBox s={15} />} c="#00b180" text="CNT(airplane_.." />
              <MarkPill icon={<DetailDots />} c="#4996b2" text="Location - Spli.." />
            </PillList>
          </Card>
        </SideCol>
        <Work>
          <Shelf>
            <ShelfName><Bars3 />Columns</ShelfName>
            <Pill $w={148} $c="#00b180">Longitude (generated)</Pill>
          </Shelf>
          <Shelf>
            <ShelfName><RowsIcon />Rows</ShelfName>
            <Pill $w={148} $c="#00b180">Latitude (generated)</Pill>
          </Shelf>
          <ViewRow>
            <Canvas>
              <SheetTitle>Accident based on Regions</SheetTitle>
              <MapFrame>
                <WorldMap />
                <Attribution>© 2023 Mapbox © OpenStreetMap</Attribution>
                <Unknown>289 unknown</Unknown>
              </MapFrame>
            </Canvas>
            <Legend>
              <LegendHead>CNT(airplane_crash.csv)</LegendHead>
              <Ramp />
              <RampLabels><span>1</span><span>189</span></RampLabels>
            </Legend>
          </ViewRow>
        </Work>
      </Main>
      <TabStrip>
        <Tab $w={130}><IconSlot $w={14}><Cylinder /></IconSlot>Data Source</Tab>
        <Tab $w={95} $end>ed in 1972(Ma...</Tab>
        <Tab $w={199}>Highest no.of Accident happene...</Tab>
        <Tab $w={200}>Top 10 locations which had mor...</Tab>
        <Tab $w={200}>Top3 flights which have max acc...</Tab>
        <Tab $w={168} $on>Accident based on Regions</Tab>
        <Tab $w={102} $pad={8}><DashIcon />Dashboard 1</Tab>
        <Tab $w={105} $pad={8}><DashIcon />Dashboard 2</Tab>
        <Tab $w={71} $pad={8} $gap={4}><StoryIcon />Story 1</Tab>
        <Tab $w={34} $center><TabNew k="sheet" /></Tab>
        <Tab $w={30} $center><TabNew k="dash" /></Tab>
        <Tab $w={32} $center><TabNew k="story" /></Tab>
      </TabStrip>
      <StatusBar>
        <StatusText $w={74} $pad={3}>208 marks</StatusText>
        <StatusText $w={107} $pad={0}>1 row by 1 column</StatusText>
        <StatusText $w={818} $pad={0}>SUM of CNT(airplane_crash.csv): 5,268</StatusText>
        <StatusCell $w={127} />
        <StatusCell $w={27} />
        <StatusCell $w={28} />
        <StatusCell $w={46} />
        <StatusCell $w={70} $gap={7}>
          <Svg s={8} stroke="#666"><path d="M1 1v6" /><path d="M7 1L3 4l4 3z" fill="#666" /></Svg>
          <Svg s={8} stroke="none"><path d="M6 1L1 4l5 3z" fill="#666" /></Svg>
          <Svg s={8} stroke="none"><path d="M2 1l5 3-5 3z" fill="#666" /></Svg>
          <Svg s={8} stroke="#666"><path d="M7 1v6" /><path d="M1 1l4 3-4 3z" fill="#666" /></Svg>
        </StatusCell>
        <StatusCell $w={67} $gap={10}>
          <Svg s={12} stroke="#bdbdbd"><path d="M0 2h12M0 6h12M0 10h12M2 0v12M6 0v12M10 0v12" strokeWidth="2" strokeDasharray="2 1" /></Svg>
          <Svg s={12} stroke="none"><path d="M0 0h12v8H0z" fill="#a8a8a8" /><path d="M0 9h3v3H0zM4.500 9h3v3h-3zM9 9h3v3H9z" fill="#bdbdbd" /></Svg>
          <Svg s={12} stroke="none"><path d="M1 0h10v12H1z" fill="#777" /></Svg>
        </StatusCell>
      </StatusBar>
      <Taskbar>
        <TaskSlot $w={48}>
          <Svg s={16} stroke="none"><path d="M0 2.200l7-1v6.300H0zM8 1l8-1.100v7.600H8zM0 8.500h7v6.300l-7-1zM8 8.500h8V16l-8-1.100z" fill="#fff" /></Svg>
        </TaskSlot>
        <TaskSearch>
          <Svg s={20} stroke="#fff"><circle cx="10" cy="10" r="8.500" strokeWidth="2.300" /></Svg>
          Type here to search
          <MicSlot><Svg s={12} h={18} stroke="#bbb"><path d="M3.500 1.500h5v9h-5zM1 8v3.500q0 2.500 5 2.500t5-2.500V8M6 14v3M3 17.500h6" /></Svg></MicSlot>
        </TaskSearch>
        <TaskSlot $w={48}>
          <Svg s={16} stroke="#fff"><path d="M1 4.500h10v7H1zM0 1.500h12M0 14.500h12M14 4v1M14 7v1M14 10v1" /></Svg>
        </TaskSlot>
        <TaskSlot $w={50}>
          <Svg s={20} h={22} stroke="none">
            <path d="M1 5h18v16H1z" fill="#f5f5f5" />
            <path d="M6 5V2h8v3" stroke="#f5f5f5" fill="none" strokeWidth="1.500" />
            <path d="M6 9h3.700v3.700H6z" fill="#f25022" /><path d="M10.300 9H14v3.700h-3.700z" fill="#7fba00" />
            <path d="M6 13.300h3.700V17H6z" fill="#00a4ef" /><path d="M10.300 13.300H14V17h-3.700z" fill="#ffb900" />
          </Svg>
        </TaskSlot>
        <TaskSlot $w={50} $mark>
          <Svg s={22} h={20} stroke="none">
            <path d="M1 1h8l2 2h10v16H1z" fill="#f3c94f" />
            <path d="M6 10h10v9h-3v-4H9v4H6z" fill="#2a9bd8" />
          </Svg>
        </TaskSlot>
        <TaskSlot $w={47} $on $mark><Logo mono="#3f8fc9" s={22} /></TaskSlot>
        <Spacer />
        <TaskSlot $w={20}>
          <Svg s={16} stroke="#fff"><circle cx="5" cy="8" r="2.500" /><path d="M1 15q0-4 3-4.500M9 15q0-3-2-4" /><circle cx="11" cy="4" r="2.500" /><path d="M8 10q3-3 7 2" /></Svg>
        </TaskSlot>
        <TaskSlot $w={17} />
        <TaskSlot $w={20}>
          <Svg s={12} h={8} stroke="#fff"><path d="M1 7l5-5.500L11 7" /></Svg>
        </TaskSlot>
        <TaskSlot $w={27}>
          <Svg s={16} stroke="#888"><path d="M2 14q0-9 12-12M6 14q0-5 8-8M10 14q0-2 4-4" strokeDasharray="1.500 1" /><path d="M3 1v4M1 3h4" stroke="#fff" /></Svg>
        </TaskSlot>
        <TaskSlot $w={18}>
          <Svg s={16} h={10} stroke="#fff"><path d="M.5 1.500h13v7H.5z" /><path d="M2 3h6v4H2z" fill="#fff" stroke="none" /><path d="M15 4v2" /></Svg>
        </TaskSlot>
        <TaskSlot $w={30}>
          <Svg s={16} stroke="#fff"><path d="M1 6h3l4-4v12l-4-4H1zM10.500 6q1 2 0 4M12.500 4q2 4 0 8" /></Svg>
        </TaskSlot>
        <TrayText $w={36}>ENG</TrayText>
        <TrayText $w={44}><span>11:48</span><span>13-04-2023</span></TrayText>
        <NotifyWrap>
          <Svg s={16} stroke="none"><path d="M1 1h14v11H7l-2 3v-3H1z" fill="#fff" /><path d="M3 4h10M3 6.500h10M3 9h10" stroke="#333" /></Svg>
          <NotifyBadge>1</NotifyBadge>
        </NotifyWrap>
      </Taskbar>
    </Page>
  );
}
